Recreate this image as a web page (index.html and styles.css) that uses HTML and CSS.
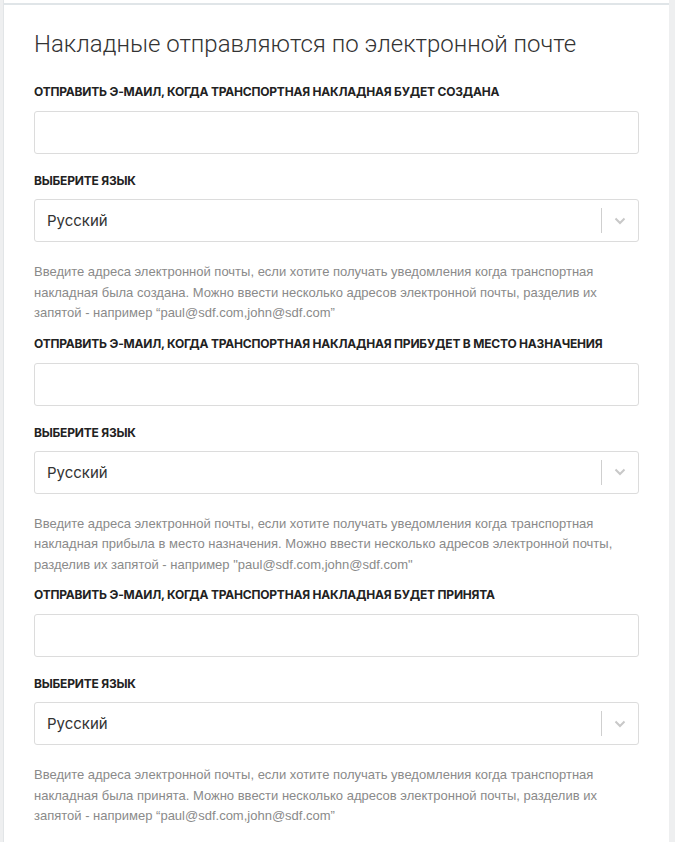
FILE: index.html
```html
<!DOCTYPE html>
<html lang="ru">
<head>
    <meta charset="UTF-8">
    <meta name="viewport" content="width=device-width, initial-scale=1.0">
    <title>Накладные отправляются по электронной почте</title>
    <link rel="stylesheet" href="styles.css">
</head>
<body>
    <div class="card">
        <div class="card-top"></div>
        <div class="card-body">
            <h1>Накладные отправляются по электронной почте</h1>

            <div class="block">
                <label class="field-label">Отправить э-маил, когда транспортная накладная будет создана</label>
                <input type="text" class="field-input">
                <label class="field-label">Выберите язык</label>
                <div class="select">
                    <span class="select-value">Русский</span>
                    <span class="select-sep"></span>
                    <svg class="select-arrow" width="12" height="8" viewBox="0 0 12 8"><path d="M1.5 1.5 L6 6 L10.5 1.5" fill="none" stroke="#c8c8c8" stroke-width="2"/></svg>
                </div>
                <p class="help">Введите адреса электронной почты, если хотите получать уведомления когда транспортная накладная была создана. Можно ввести несколько адресов электронной почты, разделив их запятой - например “paul@sdf.com,john@sdf.com”</p>
            </div>

            <div class="block">
                <label class="field-label">Отправить э-маил, когда транспортная накладная прибудет в место назначения</label>
                <input type="text" class="field-input">
                <label class="field-label">Выберите язык</label>
                <div class="select">
                    <span class="select-value">Русский</span>
                    <span class="select-sep"></span>
                    <svg class="select-arrow" width="12" height="8" viewBox="0 0 12 8"><path d="M1.5 1.5 L6 6 L10.5 1.5" fill="none" stroke="#c8c8c8" stroke-width="2"/></svg>
                </div>
                <p class="help">Введите адреса электронной почты, если хотите получать уведомления когда транспортная накладная прибыла в место назначения. Можно ввести несколько адресов электронной почты, разделив их запятой - например "paul@sdf.com,john@sdf.com"</p>
            </div>

            <div class="block">
                <label class="field-label">Отправить э-маил, когда транспортная накладная будет принята</label>
                <input type="text" class="field-input">
                <label class="field-label">Выберите язык</label>
                <div class="select">
                    <span class="select-value">Русский</span>
                    <span class="select-sep"></span>
                    <svg class="select-arrow" width="12" height="8" viewBox="0 0 12 8"><path d="M1.5 1.5 L6 6 L10.5 1.5" fill="none" stroke="#c8c8c8" stroke-width="2"/></svg>
                </div>
                <p class="help">Введите адреса электронной почты, если хотите получать уведомления когда транспортная накладная была принята. Можно ввести несколько адресов электронной почты, разделив их запятой - например “paul@sdf.com,john@sdf.com”</p>
            </div>
        </div>
    </div>
</body>
</html>
```

FILE: styles.css
```css
body {
    margin: 0;
    padding: 0 6px 0 3px;
    background-color: #eeeff0;
    font-family: Inter, 'Noto Sans', sans-serif;
    color: #222;
}
.card {
    background: white;
    border-left: 1px solid #e2e5e7;
    min-height: 842px;
}
.card-top {
    height: 3px;
    border-bottom: 2px solid #e0e5e8;
}
.card-body {
    padding: 0 30px 0 30px;
}
h1 {
    font-family: Roboto, sans-serif;
    font-weight: 300;
    font-size: 24px;
    color: #333;
    margin: 0;
    padding-top: 25px;
    line-height: 28px;
    margin-bottom: 26px;
}
.block {
    display: flex;
    flex-direction: column;
    margin-bottom: 12px;
}
.field-label {
    display: block;
    font-size: 12px;
    font-weight: 700;
    text-transform: uppercase;
    letter-spacing: -0.2px;
    line-height: 16px;
    color: #222;
    margin-bottom: 10px;
}
.field-input {
    box-sizing: border-box;
    height: 43px;
    border: 1px solid #dcdcdc;
    border-radius: 3px;
    margin: 1px 0 19px 0;
    padding: 0 12px;
    font-size: 15px;
    outline: none;
}
.select {
    box-sizing: border-box;
    height: 43px;
    border: 1px solid #dcdcdc;
    border-radius: 3px;
    display: flex;
    align-items: center;
    padding-left: 12px;
}
.select-value {
    flex: 1;
    font-size: 15px;
    color: #333;
}
.select-sep {
    width: 1px;
    height: 25px;
    background: #cfcfcf;
}
.select-arrow {
    margin: 0 12px 0 12px;
}
.help {
    margin: 20px 0 0 0;
    font-family: 'Liberation Sans', Arial, sans-serif;
    font-size: 13px;
    line-height: 20.5px;
    color: #8a8a8a;
    padding-right: 20px;
}
```
